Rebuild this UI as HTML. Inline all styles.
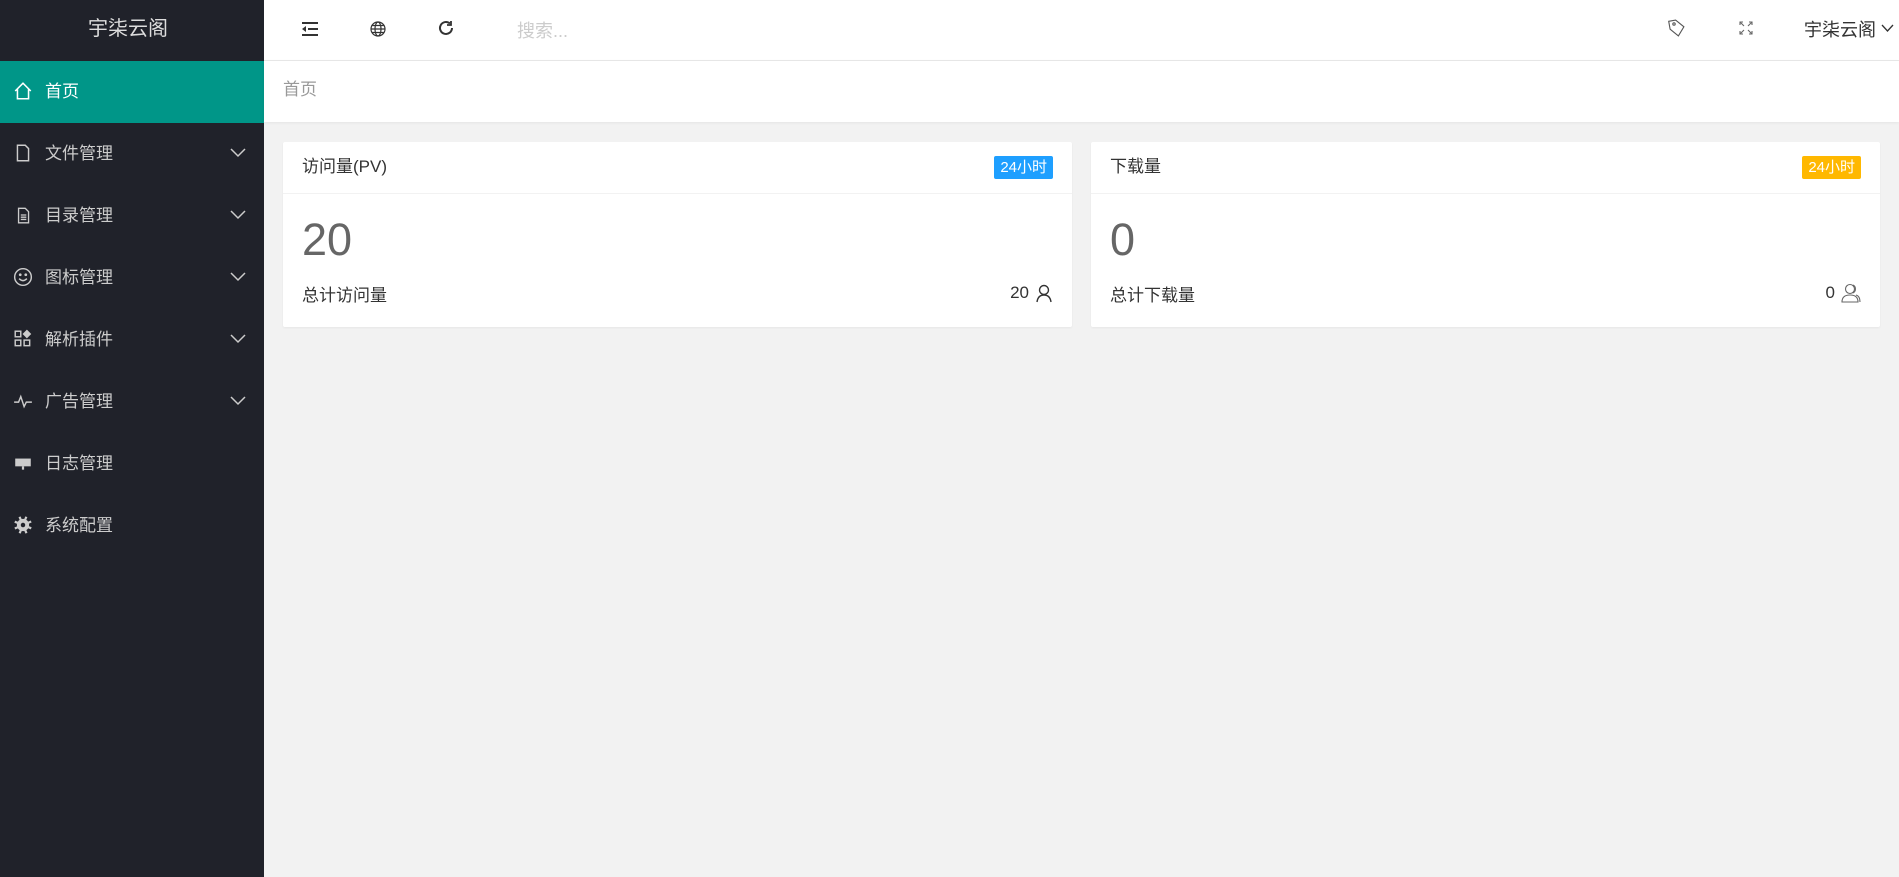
<!DOCTYPE html>
<html><head><meta charset="utf-8"><style>
*{margin:0;padding:0;box-sizing:border-box}
body{width:1899px;height:877px;overflow:hidden;background:#f2f2f2;font-family:"Liberation Sans","Noto Sans CJK SC",sans-serif;position:relative}
.side{position:absolute;left:0;top:0;width:264px;height:877px;background:#20222a}
.logo{height:61px;line-height:58px;text-align:center;color:#ddd;font-size:20px;padding-right:8px}
.item{position:absolute;left:0;width:264px;height:62px;color:#ccc;font-size:17px}
.item .ic{position:absolute;left:13px;top:50%;transform:translateY(-55%);width:20px;height:20px}
.item span{position:absolute;left:45px;top:50%;transform:translateY(-60%)}
.item .ch{position:absolute;left:230px;top:50%;transform:translateY(-60%)}
.active{background:#009688;color:#fff}
.hdr{position:absolute;left:264px;top:0;right:0;height:61px;background:#fff;border-bottom:1px solid #e8e8e8}
.bc{position:absolute;left:264px;top:61px;right:0;height:61px;background:#fff;box-shadow:0 1px 3px rgba(0,0,0,.06);color:#999;font-size:17px;line-height:58px;padding-left:19px}
.card{position:absolute;top:142px;height:185px;background:#fff;border-radius:2px;box-shadow:0 1px 2px rgba(0,0,0,.05)}
.ch1{height:52px;border-bottom:1px solid #f2f2f2;font-size:17px;color:#333;line-height:50px;padding-left:19px;position:relative}
.badge{position:absolute;right:19px;top:14px;height:23px;line-height:23px;padding:0 6px;color:#fff;font-size:15px;border-radius:2px}
.num{position:absolute;left:19px;top:72px;font-size:45px;color:#666}
.foot{position:absolute;left:19px;top:139px;font-size:17px;color:#333}
.fr{position:absolute;right:19px;top:140px;font-size:17px;color:#333;display:flex;align-items:center;gap:6px}
</style></head><body>
<div class="side">
<div class="logo">宇柒云阁</div>
<div class="item active" style="top:61px"><svg class="ic" viewBox="0 0 18 18" fill="none" stroke="#fff" stroke-width="1.4"><path d="M2 9L9 2l7 7M4 7v9h10V7"/></svg><span>首页</span></div>
<div class="item" style="top:123px"><svg class="ic" viewBox="0 0 18 18" fill="none" stroke="#ccc" stroke-width="1.3"><path d="M4 2h7l3 3v11H4z"/></svg><span>文件管理</span><svg class="ch" width="16" height="10" viewBox="0 0 16 10" fill="none" stroke="#ccc" stroke-width="1.5"><path d="M1 1l7 7 7-7"/></svg></div>
<div class="item" style="top:185px"><svg class="ic" viewBox="0 0 18 18" fill="none" stroke="#ccc" stroke-width="1.2"><path d="M5 3h6l3 3v10H5zM7 9h5M7 11h5M7 13h5"/></svg><span>目录管理</span><svg class="ch" width="16" height="10" viewBox="0 0 16 10" fill="none" stroke="#ccc" stroke-width="1.5"><path d="M1 1l7 7 7-7"/></svg></div>
<div class="item" style="top:247px"><svg class="ic" viewBox="0 0 18 18" fill="none" stroke="#ccc" stroke-width="1.3"><circle cx="9" cy="9" r="7.5"/><path d="M5.5 10.5q3.5 3.5 7 0"/><circle cx="6.5" cy="7" r=".6"/><circle cx="11.5" cy="7" r=".6"/></svg><span>图标管理</span><svg class="ch" width="16" height="10" viewBox="0 0 16 10" fill="none" stroke="#ccc" stroke-width="1.5"><path d="M1 1l7 7 7-7"/></svg></div>
<div class="item" style="top:309px"><svg class="ic" viewBox="0 0 18 18" fill="none" stroke="#ccc" stroke-width="1.3"><rect x="2" y="2" width="5" height="5"/><rect x="2" y="10" width="5" height="5"/><rect x="10" y="10" width="5" height="5"/><path d="M12.5 1.5l3 3-3 3-3-3z" fill="#ccc"/></svg><span>解析插件</span><svg class="ch" width="16" height="10" viewBox="0 0 16 10" fill="none" stroke="#ccc" stroke-width="1.5"><path d="M1 1l7 7 7-7"/></svg></div>
<div class="item" style="top:371px"><svg class="ic" viewBox="0 0 18 18" fill="none" stroke="#ccc" stroke-width="1.3"><path d="M1 10h4l2-5 3 9 2-4h5"/></svg><span>广告管理</span><svg class="ch" width="16" height="10" viewBox="0 0 16 10" fill="none" stroke="#ccc" stroke-width="1.5"><path d="M1 1l7 7 7-7"/></svg></div>
<div class="item" style="top:433px"><svg class="ic" viewBox="0 0 18 18" fill="#ccc"><rect x="2" y="5" width="14" height="7"/><rect x="8" y="12" width="2" height="3"/></svg><span>日志管理</span></div>
<div class="item" style="top:495px"><svg class="ic" viewBox="0 0 18 18" fill="#ccc"><circle cx="9" cy="9" r="5.5"/><path d="M8 1h2v16H8zM1 8h16v2H1z" transform="rotate(22 9 9)"/><path d="M8 1h2v16H8zM1 8h16v2H1z" transform="rotate(67 9 9)"/><circle cx="9" cy="9" r="2" fill="#20222a"/></svg><span>系统配置</span></div>
</div>
<div class="hdr">
<svg style="position:absolute;left:37px;top:21px" width="18" height="16" viewBox="0 0 18 16" fill="#333"><rect x="1" y="1" width="16" height="2"/><rect x="7" y="7" width="10" height="2"/><rect x="1" y="13" width="16" height="2"/><path d="M5 5v6L1 8z"/></svg>
<svg style="position:absolute;left:105px;top:20px" width="18" height="18" viewBox="0 0 18 18" fill="none" stroke="#333" stroke-width="1.2"><circle cx="9" cy="9" r="7"/><ellipse cx="9" cy="9" rx="3" ry="7"/><path d="M2 9h14M3 5.5h12M3 12.5h12"/></svg>
<svg style="position:absolute;left:173px;top:19px" width="18" height="18" viewBox="0 0 18 18" fill="none" stroke="#333" stroke-width="2"><path d="M15 9a6 6 0 1 1-2-4.5"/><path d="M14 2v4h-4" stroke-width="1.8"/></svg>
<div style="position:absolute;left:253px;top:17px;font-size:18px;color:#ccc">搜索...</div>
<svg style="position:absolute;left:1404px;top:18px" width="18" height="20" viewBox="0 0 18 20" fill="none" stroke="#555" stroke-width="1.1"><path d="M2 2h7l7 8-7 8-7-8z" transform="rotate(-10 9 10)"/><circle cx="6" cy="6" r="1.2"/></svg>
<svg style="position:absolute;left:1475px;top:21px" width="14" height="14" viewBox="0 0 14 14" fill="none" stroke="#666" stroke-width="1.1"><path d="M1 4V1h3M10 1h3v3M13 10v3h-3M4 13H1v-3M1 1l4 4M13 1l-4 4M13 13l-4-4M1 13l4-4"/></svg>
<div style="position:absolute;left:1540px;top:16px;font-size:18px;color:#333">宇柒云阁</div>
<svg style="position:absolute;left:1617px;top:24px" width="13" height="9" viewBox="0 0 13 9" fill="none" stroke="#333" stroke-width="1.3"><path d="M1 1l5.5 6L12 1"/></svg>
</div>
<div class="bc">首页</div>
<div class="card" style="left:283px;width:789px">
<div class="ch1">访问量(PV)<span class="badge" style="background:#1e9fff">24小时</span></div>
<div class="num">20</div><div class="foot">总计访问量</div>
<div class="fr" style="top:141px">20 <svg width="18" height="19" viewBox="0 0 18 19" fill="none" stroke="#333" stroke-width="1.4"><circle cx="9" cy="6" r="4.5"/><path d="M2 18q1-7 7-7t7 7"/></svg></div>
</div>
<div class="card" style="left:1091px;width:789px">
<div class="ch1">下载量<span class="badge" style="background:#ffb800">24小时</span></div>
<div class="num">0</div><div class="foot">总计下载量</div>
<div class="fr" style="top:141px">0 <svg width="20" height="20" viewBox="0 0 20 20" fill="none" stroke="#666" stroke-width="1.1"><circle cx="9" cy="6" r="4.5"/><path d="M1 19q0-7 8-7t8 7z"/><path d="M12 2a4.5 4.5 0 0 1 0 8M15 12q4 1 4 7"/></svg></div>
</div>
</body></html>
